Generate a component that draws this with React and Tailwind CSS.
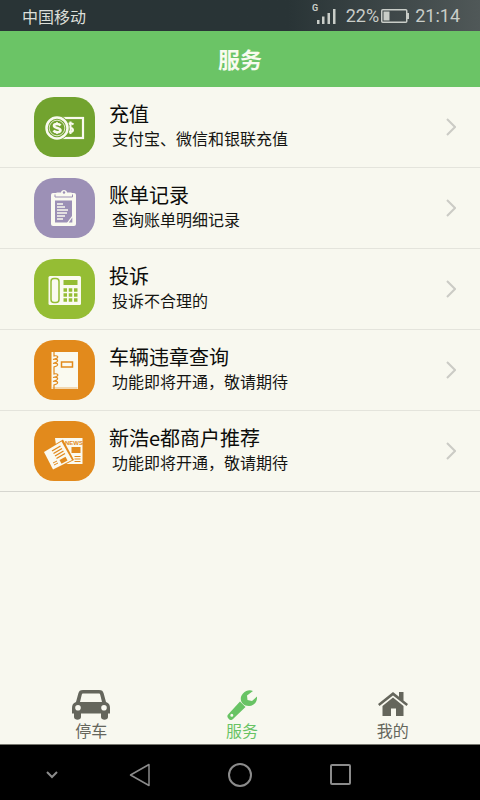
function RechargeIcon() {
    return (
        <svg viewBox="0 0 60 60" className="h-full w-full" aria-hidden="true">
            <rect x="27.5" y="21" width="21" height="20" fill="none" stroke="#fafaf0" strokeWidth="2.200" />
            <path d="M39 27.500c-2-2-5.500-1.500-5.500 1 0 3 5 1.500 5 4.500 0 2.500-4 2.500-6 .5M36 24.500v12.500" fill="none" stroke="#fafaf0" strokeWidth="2" />
            <circle cx="22.500" cy="31" r="12.500" fill="#72a32f" />
            <circle cx="22.500" cy="31" r="10.500" fill="none" stroke="#fafaf0" strokeWidth="2.500" />
            <circle cx="22.500" cy="31" r="7.800" fill="none" stroke="#fafaf0" strokeWidth=".8" />
            <path d="M26 28.500c-1.500-2.200-6.500-2-6.500.3 0 2.700 6.500 1.700 6.500 4.500 0 2.500-5.500 2.500-7 .2" fill="none" stroke="#fafaf0" strokeWidth="2.600" />
            <path d="M22.500 25v2M22.500 35v2" stroke="#fafaf0" strokeWidth="1.500" />
        </svg>
    );
}

function BillIcon() {
    return (
        <svg viewBox="0 0 60 60" className="h-full w-full" aria-hidden="true">
            <rect x="16.500" y="15" width="25" height="33" rx="2" fill="#fafaf0" />
            <path d="M20.500 22.500h17v22h-17z" fill="#9c90b6" />
            <path d="M22 14.500h4.500c0-3.500 6-3.500 6 0H37V18H22z" fill="#fafaf0" />
            <circle cx="29.500" cy="14.500" r="1.200" fill="#9c90b6" />
            <path d="M20.500 16.500v2.500h17.500v-2.500" fill="none" stroke="#9c90b6" strokeWidth="1" />
            <path d="M22.500 26h6M22.500 29h8M22.500 32h11M22.500 35h10M22.500 38h8M22.500 41h6" stroke="#fafaf0" strokeWidth="1.400" />
            <path d="M39 36l-7 9.500h7z" fill="#fafaf0" />
            <path d="M37.800 39.500l-3.500 5h3.500z" fill="#9c90b6" />
        </svg>
    );
}

function PhoneIcon() {
    return (
        <svg viewBox="0 0 60 60" className="h-full w-full" aria-hidden="true">
            <rect x="14" y="17" width="32.500" height="29" rx="1.500" fill="#fafaf0" />
            <rect x="16.500" y="19.500" width="8" height="24" rx="3" fill="none" stroke="#95bd34" strokeWidth="1.500" />
            <path d="M29 21h14v5H29z" fill="#95bd34" />
            <path d="M29 31h14M29 36h14M29 41h14" stroke="#95bd34" strokeWidth="3.500" strokeDasharray="3.500 1.750" />
        </svg>
    );
}

function NotebookIcon() {
    return (
        <svg viewBox="0 0 60 60" className="h-full w-full" aria-hidden="true">
            <path d="M17 12h26.500v37H17z" fill="#fafaf0" />
            <path
                d="M19.500 12v4c4-1 5 1.500 2 2.500l-3 1c4-1 6 1 3.500 2.500l-3.500 1.500c4-1 6 1 3.500 2.500l-2.500 1v7c4-1 5 1.500 2.500 2.500l-3.500 1c4-1 6 1 3.500 2.500l-3.500 1.500c4-1 6 1 3.500 2.500l-2.500 1V49"
                fill="none"
                stroke="#e28a1c"
                strokeWidth="1.200"
            />
            <path d="M18 48h25" stroke="#e28a1c" strokeWidth=".6" />
            <rect x="27" y="22" width="11" height="5" fill="none" stroke="#e28a1c" strokeWidth="1.500" />
        </svg>
    );
}

function NewsIcon() {
    return (
        <svg viewBox="0 0 60 60" className="h-full w-full" aria-hidden="true">
            <path d="M20.500 17H48v26H24z" fill="#fafaf0" />
            <text x="30.500" y="24" fontSize="6" fontWeight="700" fill="#e28a1c" className="font-['Liberation_Sans']">NEWS</text>
            <path d="M37 26h9v6h-9z" fill="#e28a1c" />
            <path d="M40 35.500h6M40 38h6M40 40.500h6" stroke="#e28a1c" strokeWidth="1" />
            <path d="M9.500 30L28.500 18.500 39.500 39 18 50z" fill="#e28a1c" />
            <path d="M9.500 31L27 20.500l10.500 18.500L18.500 48.500z" fill="#fafaf0" />
            <path d="M17.500 30l8.500-5M19 32.500l8.500-5M20.500 35l8.500-5M22 37.500l8.500-5" stroke="#e28a1c" strokeWidth="1.400" />
            <path d="M25 39l6-3.200 2 3.700-6 3.200z" fill="#e28a1c" />
            <path d="M18.500 42l4-2M19.500 44l4-2" stroke="#e28a1c" strokeWidth="1" />
        </svg>
    );
}

function CarIcon() {
    return (
        <svg viewBox="0 0 38 30" className="h-[30px] w-[38px]" fill="currentColor" aria-hidden="true">
            <path
                fillRule="evenodd"
                d="M11 0h16c3 0 4 1 4.700 3.500L34 12c3 1 4 3 4 6v5.500h-2V27c0 3.500-7 3.500-7 0v-3.500H9V27c0 3.500-7 3.500-7 0v-3.500H0V18c0-3 1-5 4-6l2.300-8.500C7 1 8 0 11 0zM11.500 3.500c-1.200 0-1.500.3-1.800 1.500L8 12h22l-1.700-7c-.3-1.200-.6-1.500-1.800-1.500zM6 15a2.800 2.800 0 100 5.600A2.800 2.800 0 006 15zm26 0a2.800 2.800 0 100 5.600 2.800 2.800 0 000-5.600z"
            />
        </svg>
    );
}

function WrenchIcon() {
    return (
        <svg viewBox="0 0 30 30" className="h-[30px] w-[30px]" fill="currentColor" aria-hidden="true">
            <path d="M26 1l-6 4.500.5 4.500 4.500 1 5-4.500c.5 5-3 9.500-8 9.500-8 0-10.500-8-6-12.500C19 .5 22.500-.5 26 1z" />
            <path
                fillRule="evenodd"
                d="M13 11.500l5.500 5.500L6 29c-1.500 1.500-3 1.200-4.200 0-1.700-1.500-2-3.200-.5-4.700zM4.800 23.800a1.500 1.500 0 100 3 1.500 1.500 0 000-3z"
            />
        </svg>
    );
}

function HomeIcon() {
    return (
        <svg viewBox="0 0 30 24" className="mb-1 h-6 w-[30px]" fill="currentColor" aria-hidden="true">
            <path d="M15 0l6 4.700V0h4.500v8.500L30 12l-1.500 2L15 3.500 1.500 14 0 12z" />
            <path d="M15 5.500L25.500 14v10H18v-7.500h-5V24H4.500V14z" />
        </svg>
    );
}

const services = [
    { title: '充值', desc: '支付宝、微信和银联充值', color: 'bg-[#72a32f]', Icon: RechargeIcon },
    { title: '账单记录', desc: '查询账单明细记录', color: 'bg-[#9c90b6]', Icon: BillIcon },
    { title: '投诉', desc: '投诉不合理的', color: 'bg-[#95bd34]', Icon: PhoneIcon },
    { title: '车辆违章查询', desc: '功能即将开通，敬请期待', color: 'bg-[#e28a1c]', Icon: NotebookIcon },
    { title: '新浩e都商户推荐', desc: '功能即将开通，敬请期待', color: 'bg-[#e28a1c]', Icon: NewsIcon },
];

const tabs = [
    { label: '停车', Icon: CarIcon },
    { label: '服务', Icon: WrenchIcon, active: true },
    { label: '我的', Icon: HomeIcon },
];

function StatusBar() {
    return (
        <div className="flex h-[31px] items-center justify-between bg-linear-to-r from-[#293436] from-60% to-[#505858] pr-5 pl-[22px] text-[#dcdfd9]">
            <span className="text-base leading-6">中国移动</span>
            <div className="flex items-center font-[Roboto] text-lg leading-6 text-[#c9cdc8]">
                <svg viewBox="0 0 24 20" className="mr-2.5 mb-1 h-5 w-6" fill="currentColor" aria-label="信号">
                    <text x="0" y="7" fontSize="9" fontWeight="700">G</text>
                    <path d="M5 16h2.500v4H5zM10 12.500h2.500V20H10zM15.500 9H18v11h-2.500zM21 5h2.500v15H21z" />
                </svg>
                <span>22%</span>
                <svg viewBox="0 0 28 14" className="mr-1.5 ml-0.5 h-3.5 w-7" aria-label="电量">
                    <rect x=".75" y=".75" width="25" height="12.500" rx="1" fill="none" stroke="currentColor" strokeWidth="1.500" />
                    <path d="M2.500 2.500h6v9h-6zM26 4h2v6h-2z" fill="currentColor" />
                </svg>
                <span>21:14</span>
            </div>
        </div>
    );
}

function ServiceRow({ title, desc, color, Icon }) {
    return (
        <li className="border-b border-[#e4e4dc] last:border-[#d6d6cf]">
            <button type="button" className="flex h-20 w-full items-center pr-6 pl-[34px] text-left">
                <span className={`h-[60px] w-[61px] shrink-0 rounded-[20px] ${color}`}>
                    <Icon />
                </span>
                <span className="ml-3.5 flex-1 pb-0.5">
                    <span className="block text-xl leading-6 text-[#0c0c0a]">{title}</span>
                    <span className="block pl-[3px] text-base leading-6 text-[#151512]">{desc}</span>
                </span>
                <svg viewBox="0 0 10 18" className="h-[18px] w-2.5" fill="none" stroke="#cbcbc5" strokeWidth="2" aria-hidden="true">
                    <path d="M1 1l8 8-8 8" />
                </svg>
            </button>
        </li>
    );
}

function TabBar() {
    return (
        <nav className="grid grid-cols-3 pr-3 pl-4">
            {tabs.map(({ label, Icon, active }) => (
                <button
                    key={label}
                    type="button"
                    className={`flex h-14 flex-col items-center justify-end pb-1 ${active ? 'text-[#68c364]' : 'text-[#65665c]'}`}
                >
                    <Icon />
                    <span className="text-base leading-5">{label}</span>
                </button>
            ))}
        </nav>
    );
}

function SystemNav() {
    return (
        <div className="grid h-14 grid-cols-[90px_1fr_1fr_1fr_90px] border-t border-[#77776f] bg-black pt-1 text-[#8b8b8b]">
            <button type="button" aria-label="收起" className="flex items-center justify-center pl-3.5">
                <svg viewBox="0 0 12 8" className="h-2 w-3" fill="none" stroke="currentColor" strokeWidth="2">
                    <path d="M1 1l5 5 5-5" />
                </svg>
            </button>
            <button type="button" aria-label="返回" className="flex items-center justify-center">
                <svg viewBox="0 0 22 24" className="h-6 w-[22px]" fill="none" stroke="currentColor" strokeWidth="1.500" strokeLinejoin="round">
                    <path d="M20 1.500v21L1.500 12z" />
                </svg>
            </button>
            <button type="button" aria-label="主屏幕" className="flex items-center justify-center">
                <span className="h-6 w-6 rounded-full border-2 border-current" />
            </button>
            <button type="button" aria-label="最近任务" className="flex items-center justify-center">
                <span className="h-[21px] w-[21px] rounded-xs border-2 border-current" />
            </button>
        </div>
    );
}

export default function App() {
    return (
        <div className="flex min-h-screen flex-col bg-[#f8f8ef] font-['Noto_Sans_CJK_SC',sans-serif]">
            <StatusBar />
            <header className="flex h-14 items-center justify-center bg-[#6bc466] pb-0.5">
                <h1 className="text-[22px] leading-8 font-bold text-[#f8fbef]">服务</h1>
            </header>
            <main className="flex-1">
                <ul>
                    {services.map((item) => (
                        <ServiceRow key={item.title} {...item} />
                    ))}
                </ul>
            </main>
            <TabBar />
            <SystemNav />
        </div>
    );
}
